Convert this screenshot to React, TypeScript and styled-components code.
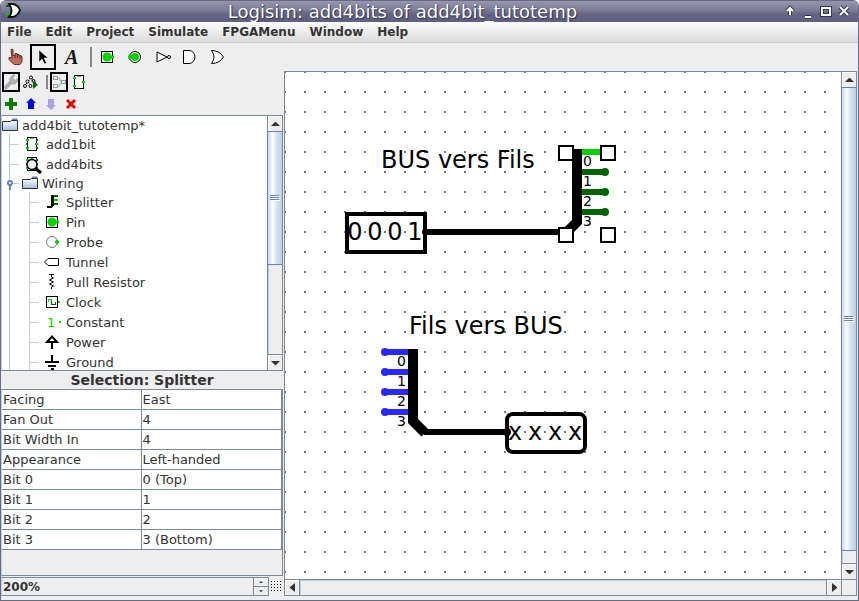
import React from "react";
import styled, { createGlobalStyle, css } from "styled-components";

const steel = "#7a8a99";
const panel = "#eeeeee";
const guide = "#b8cfe5";
const accent = "#6382bf";
const lit = "#00d200";
const unlit = "#006400";

const GlobalStyle = createGlobalStyle`
  *, *::before, *::after { box-sizing: border-box; }
  html, body { margin: 0; }
  body, button, input { font-family: "DejaVu Sans", sans-serif; font-size: 13px; color: #333; }
  button { padding: 0; border: 0; background: none; }
`;

const Frame = styled.div`
  display: flex;
  flex-direction: column;
  height: 100vh;
  min-height: 480px;
  overflow: hidden;
  background: ${panel};
  border: 1px solid #6a6a86;
  border-top: 0;
  border-radius: 6px 6px 0 0;
`;

const TitleBar = styled.header`
  display: flex;
  align-items: center;
  flex: none;
  height: 22px;
  padding: 0 6px 0 4px;
  background: linear-gradient(#6a6a86 0 1px, #9696ae 1px, #7d7d99 10px, #646483 14px, #5f5f80);
`;

const Title = styled.h1`
  flex: 1;
  margin: 0;
  padding-top: 2px;
  text-align: center;
  font-size: 18px;
  line-height: 22px;
  font-weight: 400;
  color: #fff;
  white-space: nowrap;
  text-shadow: 1px 1px 1px #33334d, 0 0 1px #33334d;
`;

const WindowButtons = styled.div`
  display: flex;
  gap: 2px;
`;

const WindowButton = styled.button`
  width: 16px;
  height: 16px;
  svg { display: block; }
`;

const MenuBar = styled.nav`
  display: flex;
  flex: none;
  align-items: flex-start;
  gap: 14px;
  height: 21px;
  padding: 0 6px;
  background: linear-gradient(#fff, #dadada);
  border-bottom: 1px solid #ccc;
`;

const MenuItem = styled.button`
  font-weight: 700;
  font-size: 12px;
  line-height: 20px;
`;

const ToolBar = styled.div<{ $height: number; $gap: number }>`
  display: flex;
  align-items: center;
  flex: none;
  gap: ${(p) => p.$gap}px;
  height: ${(p) => p.$height}px;
  padding-left: 1px;
`;

const ToolButton = styled.button<{ $size: number; $tall?: number; $active?: boolean }>`
  display: flex;
  align-items: center;
  justify-content: center;
  flex: none;
  width: ${(p) => p.$size}px;
  height: ${(p) => p.$tall ?? p.$size}px;
  ${(p) => p.$active && css`box-shadow: inset 0 0 0 2px #000;`}
`;

const Separator = styled.span<{ $tall: number }>`
  width: 2px;
  height: ${(p) => p.$tall}px;
  margin-left: 4px;
  background: #888;
`;

const Workspace = styled.main`
  display: flex;
  flex: 1;
  min-height: 0;
  margin-bottom: 4px;
`;

const Sidebar = styled.aside`
  display: flex;
  flex-direction: column;
  flex: none;
  width: 283px;
  border-right: 1px solid ${panel};
`;

const Explorer = styled.section`
  display: flex;
  flex: 1;
  min-height: 0;
  border: 1px solid ${steel};
  border-left-color: ${guide};
  background: #fff;
`;

const Tree = styled.ul`
  flex: 1;
  margin: 0;
  padding: 0;
  list-style: none;
  overflow: hidden;
`;

const TreeRow = styled.li<{ $folder?: boolean }>`
  display: flex;
  align-items: center;
  height: ${(p) => (p.$folder ? 18 : 20)}px;
  white-space: nowrap;
`;

const Guide = styled.span<{ $tick?: boolean }>`
  align-self: stretch;
  width: 20px;
  background:
    linear-gradient(${guide}, ${guide}) 7px 0 / 1px 100% no-repeat,
    linear-gradient(${guide}, ${guide}) 7px 50% / ${(p) => (p.$tick ? 10 : 1)}px 1px no-repeat;
  svg { display: block; }
`;

const TreeIcon = styled.span<{ $folder?: boolean }>`
  display: flex;
  width: ${(p) => (p.$folder ? 16 : 20)}px;
  margin-right: 4px;
`;

const ScrollBar = styled.div<{ $flat?: boolean; $fill?: boolean }>`
  display: flex;
  flex: ${(p) => (p.$fill ? "1" : "none")};
  min-height: 0;
  flex-direction: ${(p) => (p.$flat ? "row" : "column")};
  background: ${panel};
  ${(p) =>
    p.$flat
      ? css`height: 17px; border-top: 1px solid ${steel}; border-bottom: 1px solid ${steel};`
      : css`width: 15px; border-left: 1px solid ${steel};`}
`;

const ScrollButton = styled.button`
  display: flex;
  align-items: center;
  justify-content: center;
  flex: none;
  width: 14px;
  height: 15px;
  box-shadow: inset 1px 1px 0 #fff;
`;

const Thumb = styled.div<{ $grow: number }>`
  display: flex;
  align-items: center;
  justify-content: center;
  flex: ${(p) => p.$grow} 0 0;
  margin-left: -1px;
  border: 1px solid ${accent};
  border-right: 0;
  background: linear-gradient(to right, #c8daec, #fff 35%, #dce8f3 55%, #b8cfe5);
`;

const Rest = styled.div<{ $grow: number; $flat?: boolean }>`
  flex: ${(p) => p.$grow} 0 0;
  ${(p) =>
    p.$flat
      ? css`border: 1px solid ${steel}; border-width: 0 1px; box-shadow: inset 1px 1px 0 ${guide};`
      : css`border-bottom: 1px solid ${steel}; box-shadow: inset 1px 0 0 ${guide};`}
`;

const PanelTitle = styled.h2`
  flex: none;
  margin: 0;
  text-align: center;
  font-size: 14px;
  line-height: 18px;
  font-weight: 700;
`;

const Attributes = styled.section`
  flex: none;
  height: 187px;
  border: 1px solid ${steel};
  border-left-color: ${guide};
`;

const AttributeTable = styled.table`
  width: 100%;
  table-layout: fixed;
  border-collapse: separate;
  border-spacing: 0;
  background: #fff;
  border-right: 1px solid ${steel};
  th, td {
    height: 20px;
    padding: 0 1px;
    font-weight: 400;
    text-align: left;
    line-height: 19px;
    border-bottom: 1px solid ${steel};
  }
  th { border-right: 1px solid ${steel}; }
`;

const ZoomRow = styled.div`
  display: flex;
  align-items: center;
  flex: none;
  height: 19px;
  margin-top: 1px;
  gap: 2px;
`;

const Spinner = styled.div`
  display: flex;
  width: 268px;
  height: 19px;
  border: 1px solid ${steel};
  border-left-color: ${guide};
`;

const ZoomInput = styled.input`
  flex: 1;
  min-width: 0;
  padding: 0 1px;
  border: 0;
  outline: 0;
  background: ${panel};
  font-size: 12px;
  font-weight: 700;
`;

const SpinnerButtons = styled.div`
  display: flex;
  flex-direction: column;
  width: 15px;
  border-left: 1px solid ${steel};
`;

const SpinnerButton = styled.button`
  display: flex;
  flex: 1;
  align-items: center;
  justify-content: center;
  & + & { border-top: 1px solid ${steel}; }
`;

const Editor = styled.section`
  display: flex;
  flex: 1;
  min-width: 0;
  margin-right: 1px;
  border: 1px solid ${steel};
  border-bottom: 0;
`;

const EditorMain = styled.div`
  display: flex;
  flex-direction: column;
  flex: 1;
  min-width: 0;
`;

const EditorSide = styled.div`
  display: flex;
  flex-direction: column;
`;

const Corner = styled.div`
  height: 17px;
  border: 1px solid ${steel};
  border-right: 0;
`;

const Canvas = styled.svg`
  display: block;
  flex: 1;
  width: 100%;
  min-height: 0;
  background: #fff;
  text { font-family: "DejaVu Sans", sans-serif; fill: #000; }
`;

type IconProps = { w?: number; h?: number; children: React.ReactNode };
const Icon = ({ w = 20, h = 20, children }: IconProps) => (
  <svg width={w} height={h} viewBox={`0 0 ${w} ${h}`} fill="none" aria-hidden="true">
    {children}
  </svg>
);

const Arrow = ({ d, size = 9 }: { d: string; size?: number }) => (
  <svg width={size} height={size} viewBox="0 0 9 9" aria-hidden="true"><path d={d} fill="#333" /></svg>
);
const up = "M0 7 4 3H5L9 7Z";
const down = "M0 3 4 7H5L9 3Z";
const left = "M7 0V9L2 5V4Z";
const right = "M2 0V9L7 5V4Z";

const LogoIcon = () => (
  <Icon w={18} h={16}>
    <path d="M1 3h5" stroke={unlit} strokeWidth="2" />
    <path d="M1 11h5M13 7h4" stroke={lit} strokeWidth="2" />
    <path d="M4 1h4q5 1 7 6q-2 6-7 7H4q5-6 0-13Z" fill="#fff" stroke="#111" strokeWidth="2" />
  </Icon>
);

const PokeIcon = () => (
  <Icon>
    <path d="M6 2.500h2v6h2v-2h2v1h2v1h2v1h1v5l-2 3H9l-5-5v-2h2l1 1Z" fill="#c0705a" stroke="#5f2e22" />
    <path d="M10 8v3M12.500 8v3M15 9v3" stroke="#5f2e22" />
  </Icon>
);
const PointerIcon = () => (
  <Icon><path d="M6 3v12l3-3 2.500 5 2-1-2.500-5h4Z" fill="#000" stroke="#fff" strokeWidth=".5" /></Icon>
);
const PinIcon = () => (
  <Icon>
    <path d="M4.500 4.500h11v11h-11Z" fill="#fff" stroke="#000" shapeRendering="crispEdges" />
    <circle cx="10" cy="10" r="4.500" fill={lit} />
    <path d="M14 10h3" stroke={lit} strokeWidth="3" />
  </Icon>
);
const OutputIcon = () => (
  <Icon>
    <circle cx="10" cy="10" r="5.500" fill="#fff" stroke="#000" />
    <circle cx="10" cy="10" r="4" fill={lit} />
    <path d="M3 10h4" stroke={lit} strokeWidth="3" />
  </Icon>
);
const NotIcon = () => (
  <Icon><path d="M4 5v10L14 10Z" fill="#fff" stroke="#000" /><circle cx="16" cy="10" r="1.500" fill="#fff" stroke="#000" /></Icon>
);
const AndIcon = () => (
  <Icon><path d="M2.500 3.500H8a6 6.500 0 0 1 0 13H2.500Z" fill="#fff" stroke="#000" /></Icon>
);
const OrIcon = () => (
  <Icon><path d="M2.500 3.500q8 0 12 6.500q-4 6.500-12 6.500q5-6.500 0-13Z" fill="#fff" stroke="#000" /></Icon>
);
const WrenchIcon = () => (
  <Icon w={14} h={16}>
    <path d="M2 13.500 8 7" stroke="#aaa" strokeWidth="4" strokeLinecap="round" />
    <path d="M6 7V4l3-3h2L9 4l1 2h2l2-2v3l-3 3H8Z" fill="#b4b4b4" stroke="#aaa" />
  </Icon>
);
const SimulateIcon = () => (
  <Icon w={16} h={16}>
    <path d="M8 3.500 2.500 11M8 3.500l6 7M5 8l3 3" stroke="#000" strokeDasharray="2 1" />
    <g fill="#fff" stroke="#000"><circle cx="8" cy="3.500" r="1.500" /><circle cx="4.500" cy="7.500" r="1.500" /><circle cx="10.500" cy="7" r="1.500" /><circle cx="2" cy="12" r="1.500" /><circle cx="7.500" cy="12" r="1.500" /></g>
    <path d="M10 7v8l5-4Z" fill="#007000" />
  </Icon>
);
const LayoutIcon = () => (
  <Icon w={14} h={16}>
    <path d="M5 4h3v3h2M5 12h3V9h2" stroke="#90c890" />
    <g stroke="#999" fill="#eee" shapeRendering="crispEdges"><path d="M1.500 2.500h4v3h-4ZM1.500 10.500h4v3h-4ZM9.500 6.500h4v3h-4Z" /></g>
  </Icon>
);
const ChipIcon = ({ magnified }: { magnified?: boolean }) => (
  <Icon>
    <g shapeRendering="crispEdges">
      <path d="M5.500 3.500h9v13h-9Z" fill="#fff" stroke="#000" />
      <path d="M8 4.500h4" stroke="#999" />
      <path d="M4 6h3M4 14h3M13 10h3" stroke={lit} strokeWidth="2" />
      <path d="M4 10h2M14 6h2M14 14h2" stroke={unlit} strokeWidth="2" />
    </g>
    {magnified && (<><circle cx="10" cy="10.500" r="5" fill="#eef" stroke="#000" strokeWidth="1.500" /><path d="m13 14 6 5" stroke="#000" strokeWidth="3" /></>)}
  </Icon>
);
const AppearanceIcon = () => (
  <Icon w={14} h={16}>
    <g shapeRendering="crispEdges">
      <path d="M2.500 1.500h9v13h-9Z" fill="#fff" stroke="#000" />
      <path d="M5 2.500h4" stroke="#999" />
      <path d="M1 4h3M1 12h3M10 8h3" stroke={lit} strokeWidth="2" />
    </g>
  </Icon>
);
const PlusIcon = () => <Icon w={12} h={12}><path d="M6 0v12M0 6h12" stroke="#0b7a0b" strokeWidth="4" /></Icon>;
const MoveIcon = ({ flip }: { flip?: boolean }) => (
  <Icon w={12} h={12}>
    <path d={flip ? "M6 12 1 7h2V1h6v6h2Z" : "M6 0 1 5h2v6h6V5h2Z"} fill={flip ? "#a6a6e6" : "#0000e0"} />
  </Icon>
);
const DeleteIcon = () => <Icon w={12} h={12}><path d="m2 2 8 8M10 2l-8 8" stroke="#e00000" strokeWidth="3" /></Icon>;

const FolderIcon = () => (
  <svg width="16" height="16" viewBox="0 0 16 16" aria-hidden="true">
    <defs>
      <linearGradient id="folder" x1="0" y1="0" x2="0" y2="1"><stop stopColor="#fff" /><stop offset="1" stopColor="#a3bfdc" /></linearGradient>
    </defs>
    <path d="M9 3.500 10.500 1.500H15.500v4H9Z" fill={accent} />
    <path d="M.5 4.500h8l1-1h6v10H.5Z" fill="url(#folder)" stroke="#333" />
  </svg>
);
const SplitterIcon = () => (
  <Icon>
    <g shapeRendering="crispEdges">
      <path d="M11 4h5M11 12h5" stroke={unlit} strokeWidth="2" />
      <path d="M11 8h5" stroke={lit} strokeWidth="2" />
      <path d="M9 3h3v10l-2 3H5v-2h4Z" fill="#000" />
    </g>
  </Icon>
);
const ProbeIcon = () => (
  <Icon><circle cx="10" cy="10" r="5.500" fill="#fff" stroke="#777" /><path d="M13 10h4M15 8v4" stroke={lit} strokeWidth="2" /></Icon>
);
const TunnelIcon = () => <Icon><path d="M2.500 10 6 6.500h10.500v7H6Z" stroke="#000" /></Icon>;
const ResistorIcon = () => <Icon><path d="M7 2.500h5M9.500 3v2l2 1-4 2 4 2-4 2 4 2-2 1v2" stroke="#000" /></Icon>;
const ClockIcon = () => (
  <Icon><g shapeRendering="crispEdges"><path d="M4.500 4.500h11v11h-11Z" fill="#fff" stroke="#000" /><path d="M6.500 10V7.500h3V10" stroke={lit} /><path d="M9.500 9v3.500h4V10" stroke={unlit} /><path d="M16 10h2" stroke={lit} strokeWidth="2" /></g></Icon>
);
const ConstantIcon = () => (
  <Icon><text x="5" y="15" fontSize="13" fontFamily="DejaVu Sans" fill={lit}>1</text><path d="M17 10h2" stroke={lit} strokeWidth="2" /></Icon>
);
const PowerIcon = () => <Icon><path d="M10 17V10M5 10h10L10 4.500Z" stroke="#000" strokeWidth="2" /></Icon>;
const GroundIcon = () => <Icon><path d="M10 3v7M3 10h14M6 14h8M9 17h3" stroke="#000" strokeWidth="2" /></Icon>;

const libraries: { name: string; depth: number; folder?: boolean; icon: React.ReactNode }[] = [
  { name: "add4bit_tutotemp*", depth: 0, folder: true, icon: <FolderIcon /> },
  { name: "add1bit", depth: 1, icon: <ChipIcon /> },
  { name: "add4bits", depth: 1, icon: <ChipIcon magnified /> },
  { name: "Wiring", depth: 1, folder: true, icon: <FolderIcon /> },
  { name: "Splitter", depth: 2, icon: <SplitterIcon /> },
  { name: "Pin", depth: 2, icon: <PinIcon /> },
  { name: "Probe", depth: 2, icon: <ProbeIcon /> },
  { name: "Tunnel", depth: 2, icon: <TunnelIcon /> },
  { name: "Pull Resistor", depth: 2, icon: <ResistorIcon /> },
  { name: "Clock", depth: 2, icon: <ClockIcon /> },
  { name: "Constant", depth: 2, icon: <ConstantIcon /> },
  { name: "Power", depth: 2, icon: <PowerIcon /> },
  { name: "Ground", depth: 2, icon: <GroundIcon /> },
];

const attributes = [
  ["Facing", "East"],
  ["Fan Out", "4"],
  ["Bit Width In", "4"],
  ["Appearance", "Left-handed"],
  ["Bit 0", "0 (Top)"],
  ["Bit 1", "1"],
  ["Bit 2", "2"],
  ["Bit 3", "3 (Bottom)"],
];

const TextIcon = () => (
  <Icon><text x="4" y="17" fontSize="20" fontStyle="italic" fontWeight="700" fontFamily="Liberation Serif" fill="#111">A</text></Icon>
);

const gates = [
  ["Input pin", <PinIcon key="i" />],
  ["Output pin", <OutputIcon key="o" />],
  ["NOT gate", <NotIcon key="n" />],
  ["AND gate", <AndIcon key="a" />],
  ["OR gate", <OrIcon key="r" />],
] as const;

const Grip = () => (
  <Icon w={10} h={8}>
    <g shapeRendering="crispEdges">
      <path d="M1 2h9v1H1ZM1 4h9v1H1ZM1 6h9v1H1Z" fill="#fff" />
      <path d="M0 1h9v1H0ZM0 3h9v1H0ZM0 5h9v1H0Z" fill={accent} />
    </g>
  </Icon>
);

const VerticalScroll = ({ label, thumb, rest }: { label: string; thumb: number; rest: number }) => (
  <>
    <ScrollButton aria-label={`${label} up`}><Arrow d={up} /></ScrollButton>
    <Thumb $grow={thumb}><Grip /></Thumb>
    <Rest $grow={rest} />
    <ScrollButton aria-label={`${label} down`}><Arrow d={down} /></ScrollButton>
  </>
);

const Circuit = () => (
  <Canvas role="img" aria-label="Circuit">
    <defs>
      <pattern id="grid" x="-1" y="-1" width="20" height="20" patternUnits="userSpaceOnUse">
        <rect width="2" height="2" fill="#777" />
      </pattern>
    </defs>
    <rect width="100%" height="100%" fill="url(#grid)" />
    <g transform="translate(-285 -72)" fill="none">
      <rect x="347" y="214" width="78" height="38" stroke="#000" strokeWidth="4" />
      <rect x="507" y="414" width="78" height="38" rx="6" stroke="#000" strokeWidth="4" />
      <text x="381" y="168" fontSize="24">BUS vers Fils</text>
      <text x="409" y="334" fontSize="24">Fils vers BUS</text>
      <path d="M425 232H566" stroke="#000" strokeWidth="6" />
      <circle cx="425" cy="232" r="3" fill="#000" />
      <path d="M577 149V222L567 232" stroke="#000" strokeWidth="10" />
      <path d="M582 152h20" stroke={lit} strokeWidth="6" />
      <g stroke={unlit} strokeWidth="6">
        {[172, 192, 212].map((y) => (<React.Fragment key={y}><path d={`M582 ${y}h24`} /><circle cx="605" cy={y} r="4" fill={unlit} stroke="none" /></React.Fragment>))}
      </g>
      <g stroke="#2828ff" strokeWidth="6">
        {[352, 372, 392, 412].map((y) => (<React.Fragment key={y}><path d={`M384 ${y}h24`} /><circle cx="385" cy={y} r="4" fill="#2828ff" stroke="none" /></React.Fragment>))}
      </g>
      <path d="M413 349V421L425 433" stroke="#000" strokeWidth="10" />
      <path d="M424 432H507" stroke="#000" strokeWidth="6" />
      <circle cx="507" cy="432" r="4" fill="#000" />
      {[0, 1, 2, 3].map((n) => (
        <g key={n} fontSize="14">
          <text x="583" y={166 + n * 20}>{n}</text>
          <text x="397" y={366 + n * 20}>{n}</text>
        </g>
      ))}
      {["0", "0", "0", "1"].map((bit, i) => <text key={i} x={355 + i * 20} y="240" fontSize="24" textAnchor="middle">{bit}</text>)}
      {[0, 1, 2, 3].map((i) => <text key={i} x={515 + i * 20} y="440" fontSize="24" textAnchor="middle">x</text>)}
      <g fill="#fff" stroke="#000" strokeWidth="2">
        {[[559, 146], [601, 146], [559, 228], [601, 228]].map(([x, y]) => <rect key={`${x}-${y}`} x={x} y={y} width="14" height="14" />)}
      </g>
    </g>
  </Canvas>
);

const windowButtons = [
  ["Shade", "M8 12V5M5 8l3-3 3 3"],
  ["Minimize", "M5 14h6"],
  ["Maximize", "M4 5h8v7H4Z"],
  ["Close", "m4 4 8 8M12 4l-8 8"],
];

export default function App() {
  return (
    <>
      <GlobalStyle />
      <Frame>
        <TitleBar>
          <LogoIcon />
          <Title>Logisim: add4bits of add4bit_tutotemp</Title>
          <WindowButtons>
            {windowButtons.map(([name, d]) => (
              <WindowButton key={name} aria-label={name}>
                <Icon w={16} h={16}>
                  <path d={d} stroke="#33334d" strokeWidth="4" />
                  <path d={d} stroke="#fff" strokeWidth="2" />
                </Icon>
              </WindowButton>
            ))}
          </WindowButtons>
        </TitleBar>
        <MenuBar>
          {["File", "Edit", "Project", "Simulate", "FPGAMenu", "Window", "Help"].map((name) => <MenuItem key={name}>{name}</MenuItem>)}
        </MenuBar>
        <ToolBar $height={28} $gap={2}>
          <ToolButton $size={26} aria-label="Poke tool"><PokeIcon /></ToolButton>
          <ToolButton $size={26} $active aria-label="Edit tool"><PointerIcon /></ToolButton>
          <ToolButton $size={26} aria-label="Text tool"><TextIcon /></ToolButton>
          <Separator $tall={20} />
          {gates.map(([name, icon]) => <ToolButton key={name} $size={26} aria-label={name}>{icon}</ToolButton>)}
        </ToolBar>
        <Workspace>
          <Sidebar>
            <ToolBar $height={22} $gap={2}>
              <ToolButton $size={18} $tall={20} $active aria-label="Show tools"><WrenchIcon /></ToolButton>
              <ToolButton $size={18} $tall={20} aria-label="Show simulation"><SimulateIcon /></ToolButton>
              <Separator $tall={14} />
              <ToolButton $size={18} $tall={20} $active aria-label="Edit layout"><LayoutIcon /></ToolButton>
              <ToolButton $size={18} $tall={20} aria-label="Edit appearance"><AppearanceIcon /></ToolButton>
            </ToolBar>
            <ToolBar $height={22} $gap={2}>
              <ToolButton $size={18} aria-label="Add circuit"><PlusIcon /></ToolButton>
              <ToolButton $size={18} aria-label="Move up"><MoveIcon /></ToolButton>
              <ToolButton $size={18} aria-label="Move down"><MoveIcon flip /></ToolButton>
              <ToolButton $size={18} aria-label="Delete circuit"><DeleteIcon /></ToolButton>
            </ToolBar>
            <Explorer>
              <Tree>
                {libraries.map(({ name, depth, folder, icon }) => (
                  <TreeRow key={name} $folder={folder}>
                    {depth > 0 && (
                      <Guide $tick={depth === 1}>
                        {name === "Wiring" && (
                          <Icon w={20} h={18}>
                            <circle cx="8" cy="9" r="2" fill="#fff" stroke={accent} strokeWidth="2" />
                            <path d="M8 11v5" stroke={accent} strokeWidth="2" />
                          </Icon>
                        )}
                      </Guide>
                    )}
                    {depth > 1 && <Guide $tick />}
                    <TreeIcon $folder={folder}>{icon}</TreeIcon>
                    {name}
                  </TreeRow>
                ))}
              </Tree>
              <ScrollBar><VerticalScroll label="Scroll tools" thumb={134} rest={90} /></ScrollBar>
            </Explorer>
            <PanelTitle>Selection: Splitter</PanelTitle>
            <Attributes>
              <AttributeTable>
                <tbody>
                  {attributes.map(([name, value]) => <tr key={name}><th scope="row">{name}</th><td>{value}</td></tr>)}
                </tbody>
              </AttributeTable>
            </Attributes>
            <ZoomRow>
              <Spinner>
                <ZoomInput aria-label="Zoom" defaultValue="200%" />
                <SpinnerButtons>
                  <SpinnerButton aria-label="Zoom in"><Arrow d={up} size={4} /></SpinnerButton>
                  <SpinnerButton aria-label="Zoom out"><Arrow d={down} size={4} /></SpinnerButton>
                </SpinnerButtons>
              </Spinner>
              <ToolButton $size={12} aria-label="Show grid">
                <Icon w={12} h={12}><path d="M0 .5h12M0 3.500h12M0 6.500h12M0 9.500h12" stroke="#000" strokeDasharray="1 2" shapeRendering="crispEdges" /></Icon>
              </ToolButton>
            </ZoomRow>
          </Sidebar>
          <Editor>
            <EditorMain>
              <Circuit />
              <ScrollBar $flat>
                <ScrollButton aria-label="Scroll canvas left"><Arrow d={left} /></ScrollButton>
                <Rest $grow={1} $flat />
                <ScrollButton aria-label="Scroll canvas right"><Arrow d={right} /></ScrollButton>
              </ScrollBar>
            </EditorMain>
            <EditorSide>
              <ScrollBar $fill><VerticalScroll label="Scroll canvas" thumb={465} rest={12} /></ScrollBar>
              <Corner />
            </EditorSide>
          </Editor>
        </Workspace>
      </Frame>
    </>
  );
}
